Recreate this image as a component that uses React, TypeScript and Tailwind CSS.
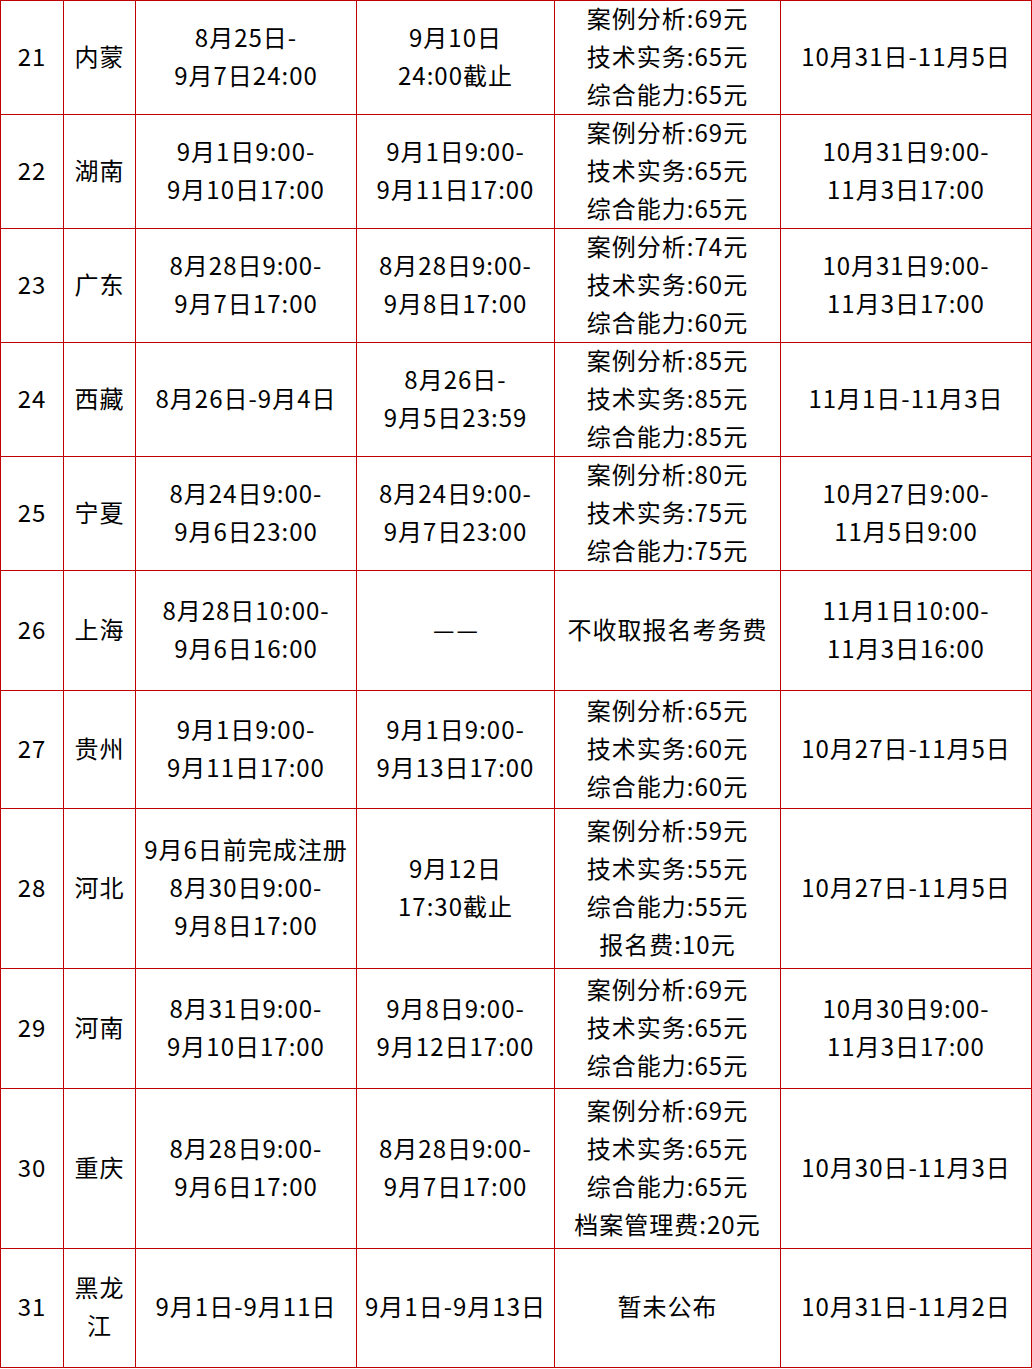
const rows: { h: string; cells: string[][] }[] = [
  {
    h: "h-[113px]",
    cells: [["21"], ["内蒙"], ["8月25日-", "9月7日24:00"], ["9月10日", "24:00截止"], ["案例分析:69元", "技术实务:65元", "综合能力:65元"], ["10月31日-11月5日"]],
  },
  {
    h: "h-[113px]",
    cells: [["22"], ["湖南"], ["9月1日9:00-", "9月10日17:00"], ["9月1日9:00-", "9月11日17:00"], ["案例分析:69元", "技术实务:65元", "综合能力:65元"], ["10月31日9:00-", "11月3日17:00"]],
  },
  {
    h: "h-[113px]",
    cells: [["23"], ["广东"], ["8月28日9:00-", "9月7日17:00"], ["8月28日9:00-", "9月8日17:00"], ["案例分析:74元", "技术实务:60元", "综合能力:60元"], ["10月31日9:00-", "11月3日17:00"]],
  },
  {
    h: "h-[113px]",
    cells: [["24"], ["西藏"], ["8月26日-9月4日"], ["8月26日-", "9月5日23:59"], ["案例分析:85元", "技术实务:85元", "综合能力:85元"], ["11月1日-11月3日"]],
  },
  {
    h: "h-[113px]",
    cells: [["25"], ["宁夏"], ["8月24日9:00-", "9月6日23:00"], ["8月24日9:00-", "9月7日23:00"], ["案例分析:80元", "技术实务:75元", "综合能力:75元"], ["10月27日9:00-", "11月5日9:00"]],
  },
  {
    h: "h-[119px]",
    cells: [["26"], ["上海"], ["8月28日10:00-", "9月6日16:00"], ["——"], ["不收取报名考务费"], ["11月1日10:00-", "11月3日16:00"]],
  },
  {
    h: "h-[117px]",
    cells: [["27"], ["贵州"], ["9月1日9:00-", "9月11日17:00"], ["9月1日9:00-", "9月13日17:00"], ["案例分析:65元", "技术实务:60元", "综合能力:60元"], ["10月27日-11月5日"]],
  },
  {
    h: "h-[159px]",
    cells: [["28"], ["河北"], ["9月6日前完成注册", "8月30日9:00-", "9月8日17:00"], ["9月12日", "17:30截止"], ["案例分析:59元", "技术实务:55元", "综合能力:55元", "报名费:10元"], ["10月27日-11月5日"]],
  },
  {
    h: "h-[119px]",
    cells: [["29"], ["河南"], ["8月31日9:00-", "9月10日17:00"], ["9月8日9:00-", "9月12日17:00"], ["案例分析:69元", "技术实务:65元", "综合能力:65元"], ["10月30日9:00-", "11月3日17:00"]],
  },
  {
    h: "h-[159px]",
    cells: [["30"], ["重庆"], ["8月28日9:00-", "9月6日17:00"], ["8月28日9:00-", "9月7日17:00"], ["案例分析:69元", "技术实务:65元", "综合能力:65元", "档案管理费:20元"], ["10月30日-11月3日"]],
  },
  {
    h: "h-[118px]",
    cells: [["31"], ["黑龙", "江"], ["9月1日-9月11日"], ["9月1日-9月13日"], ["暂未公布"], ["10月31日-11月2日"]],
  },
];

export default function App() {
  return (
    <div className="w-[1032px] bg-white">
      <div
        className="grid grid-cols-[62px_71px_220px_197px_225px_250px] gap-px bg-[#c00000] p-px text-[24px] leading-[38px] tracking-[1px] text-black"
        style={{ fontFamily: '"Noto Sans CJK SC", "Noto Sans", sans-serif' }}
      >
        {rows.map((row, i) =>
          row.cells.map((lines, j) => (
            <div
              key={`${i}-${j}`}
              className={`${row.h} flex flex-col items-center justify-center bg-white pb-[4px] text-center whitespace-nowrap`}
            >
              {lines.map((line, k) =>
                line === "——" ? (
                  // two separate dashes with a small gap, as in the source
                  <span key={k} className="flex gap-[2px] tracking-normal">
                    <span>—</span>
                    <span>—</span>
                  </span>
                ) : (
                  <span key={k}>{line}</span>
                )
              )}
            </div>
          ))
        )}
      </div>
    </div>
  );
}
